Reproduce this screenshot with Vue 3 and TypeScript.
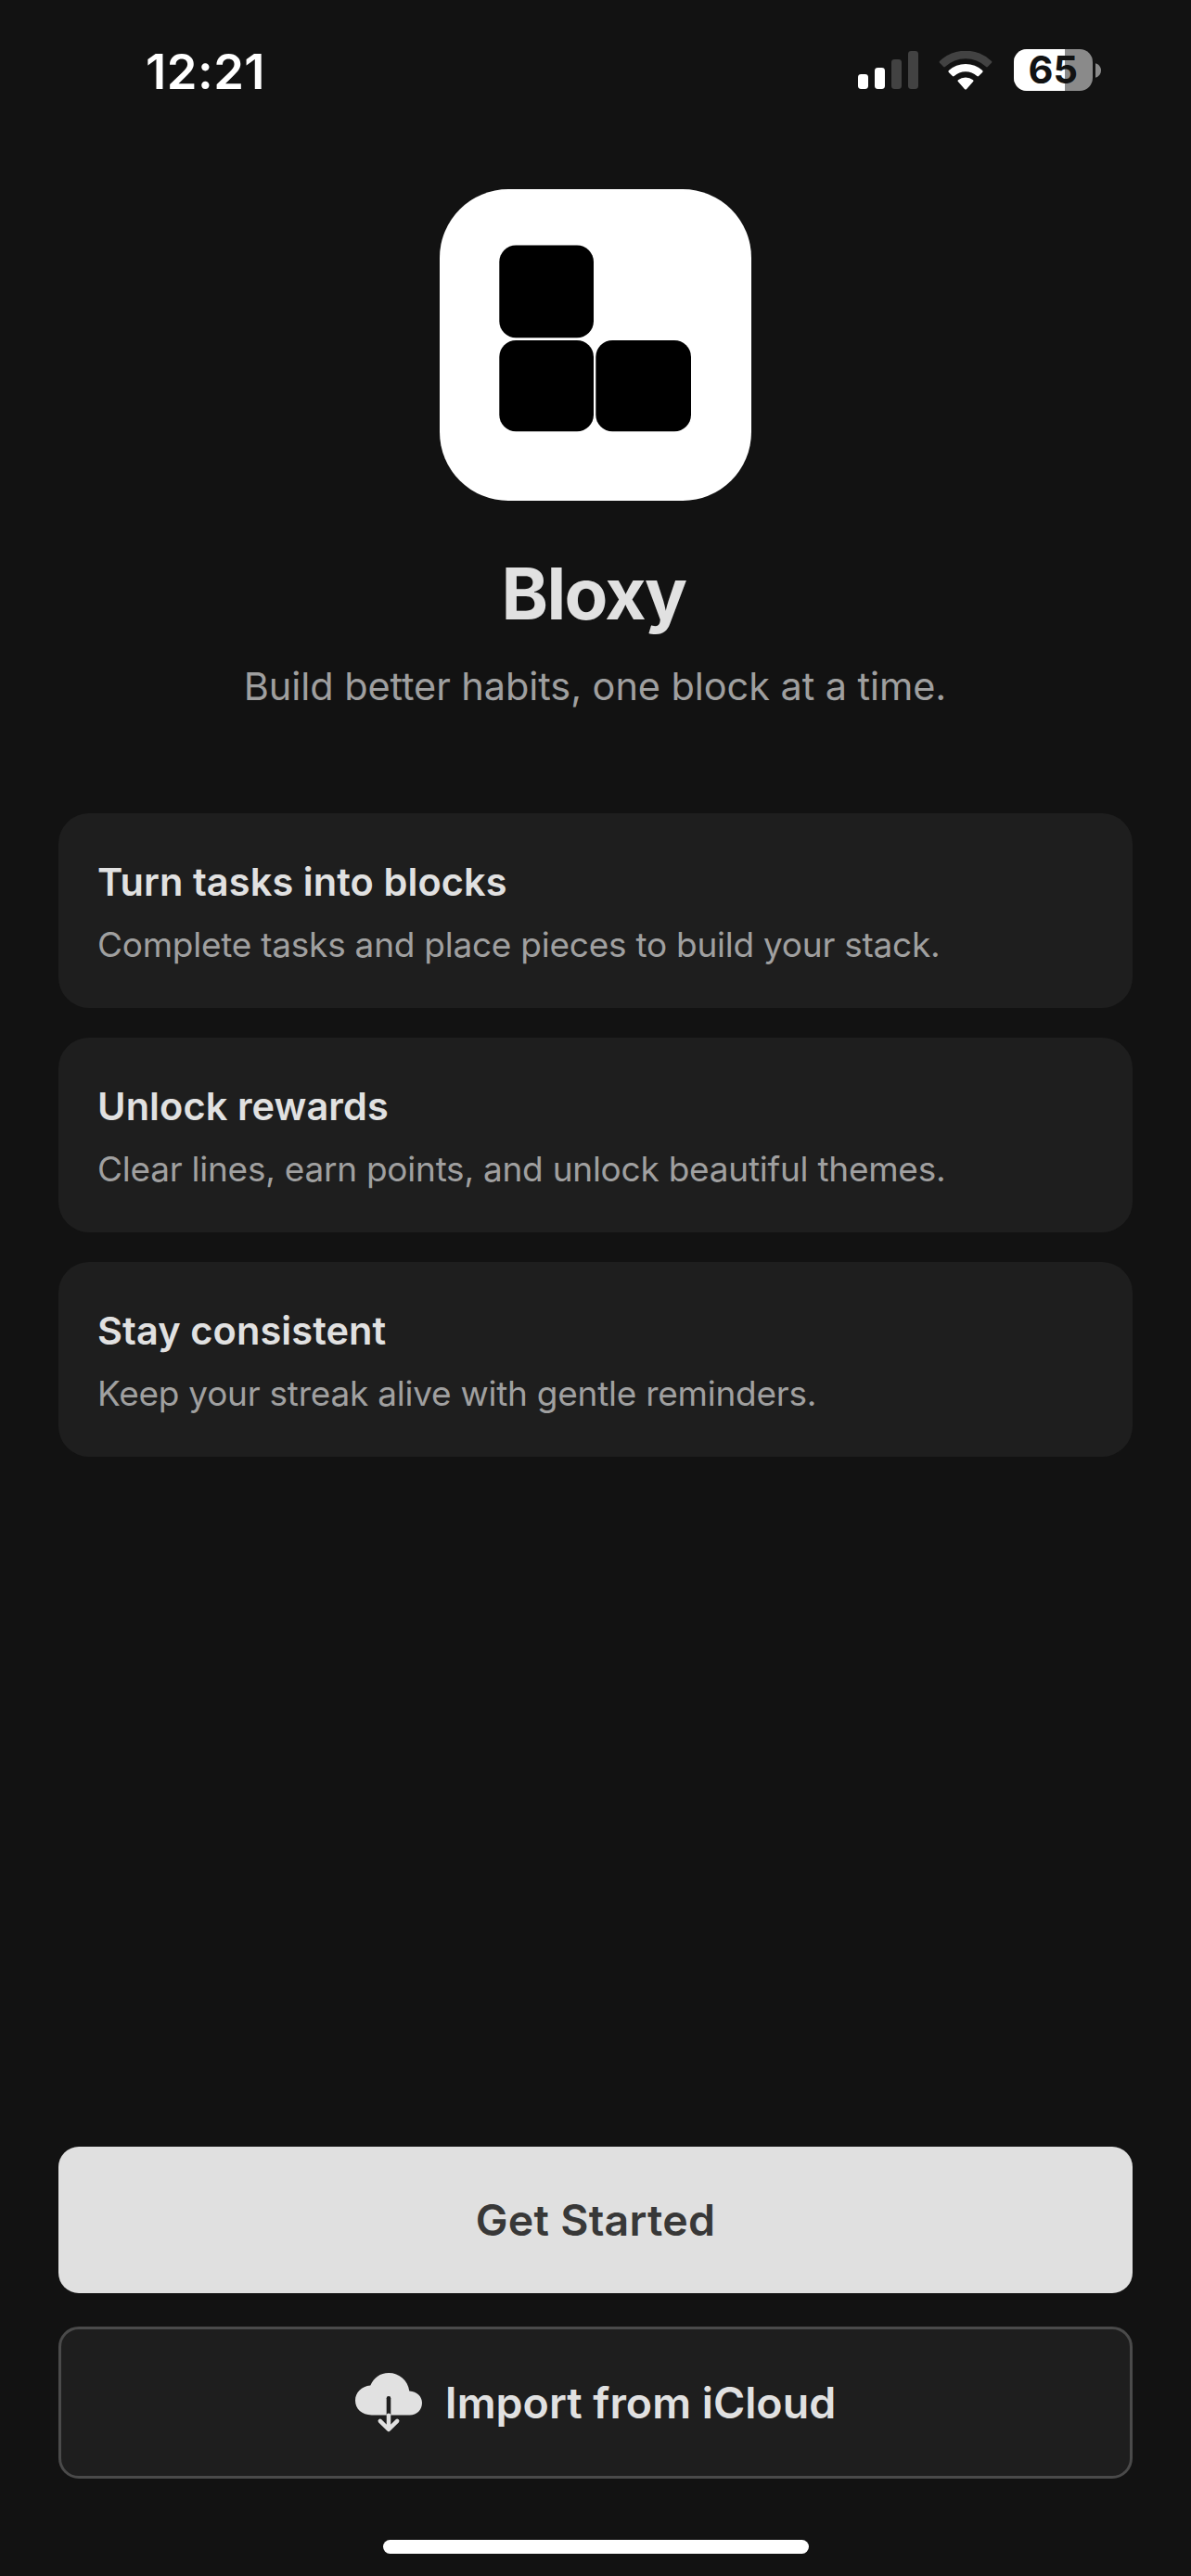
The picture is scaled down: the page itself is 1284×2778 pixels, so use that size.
<script setup lang="ts">
interface Feature {
  title: string
  text: string
}

const features: Feature[] = [
  { title: 'Turn tasks into blocks', text: 'Complete tasks and place pieces to build your stack.' },
  { title: 'Unlock rewards', text: 'Clear lines, earn points, and unlock beautiful themes.' },
  { title: 'Stay consistent', text: 'Keep your streak alive with gentle reminders.' }
]

const batteryLevel = 65
</script>

<template>
  <div class="screen">
    <header class="status">
      <span class="time">12:21</span>
      <div class="indicators">
        <svg class="signal" viewBox="0 0 65 41" width="65" height="41">
          <rect x="0" y="25" width="11" height="16" rx="3.4" fill="#fff" />
          <rect x="18" y="18" width="11" height="23" rx="3.4" fill="#fff" />
          <rect x="36" y="9" width="11" height="32" rx="3.4" fill="#424242" />
          <rect x="54" y="0" width="11" height="41" rx="3.4" fill="#424242" />
        </svg>
        <svg class="wifi" viewBox="0 0 58 42" width="58" height="42">
          <path
            d="M1 10.9A40.5 40.5 0 0 1 57 10.9Q57.8 11.8 57 12.7L52.8 17Q52 17.8 51.1 17A32 32 0 0 0 6.9 17Q6 17.8 5.2 17L1 12.7Q.2 11.8 1 10.9Z"
            fill="#424242"
          />
          <path
            d="M10.8 21.1A26.7 26.7 0 0 1 47.2 21.1Q48.1 22 47.2 22.9L43.1 27Q42.2 27.8 41.3 27A18.5 18.5 0 0 0 16.7 27Q15.8 27.8 14.9 27L10.8 22.9Q9.9 22 10.8 21.1Z"
            fill="#fff"
          />
          <path
            d="M20.9 31.3A13 13 0 0 1 37.1 31.3Q38.1 32.2 37.1 33.1L29.9 41.2Q29 42 28.1 41.2L20.9 33.1Q19.9 32.2 20.9 31.3Z"
            fill="#fff"
          />
        </svg>
        <div class="battery">
          <div class="cell">
            <div class="charge" :style="{ width: batteryLevel + '%' }"></div>
            <span class="percent">{{ batteryLevel }}</span>
          </div>
          <svg viewBox="0 0 6 16" width="6" height="16">
            <path d="M0 .3C3.4 1.2 6 4.3 6 8S3.4 14.8 0 15.7Z" fill="#8a8a8a" />
          </svg>
        </div>
      </div>
    </header>

    <section class="hero">
      <svg class="logo" viewBox="0 0 336 336" width="336" height="336">
        <rect width="336" height="336" rx="74" fill="#fff" />
        <rect x="64.3" y="60.5" width="101.7" height="99.8" rx="18" />
        <rect x="64.3" y="163" width="101.7" height="98.3" rx="18" />
        <rect x="168.3" y="163" width="102.7" height="98.3" rx="18" />
      </svg>
      <h1>Bloxy</h1>
      <p>Build better habits, one block at a time.</p>
    </section>

    <main class="features">
      <article v-for="feature in features" :key="feature.title" class="card">
        <h2>{{ feature.title }}</h2>
        <p>{{ feature.text }}</p>
      </article>
    </main>

    <footer class="actions">
      <button class="primary" type="button">Get Started</button>
      <button class="secondary" type="button">
        <svg viewBox="0 0 72 65" width="72" height="65">
          <path
            d="M17.7 45.4C7.2 45.4 0 39 0 29.8C0 21.3 6.8 14.3 16.3 13.6C19.7 5.3 27 0 36 0C47.5 0 56.6 8 58.3 19.4C66.5 19.9 72 25.2 72 32.2C72 39.9 66.5 45.4 58.7 45.4Z"
            fill="#e1e1e1"
          />
          <path d="M33.7 45V27.2a2.3 2.3 0 0 1 4.6 0V45Z" fill="#1e1e1e" />
          <path
            d="M36 45.7V60.5M26.8 51.8L36 61L45.2 51.8"
            fill="none"
            stroke="#e1e1e1"
            stroke-width="4.5"
            stroke-linecap="round"
            stroke-linejoin="round"
          />
        </svg>
        <span>Import from iCloud</span>
      </button>
    </footer>

    <div class="home-bar"></div>
  </div>
</template>

<style>
body {
  background: #121212;
}
</style>

<style scoped>
.screen {
  box-sizing: border-box;
  display: flex;
  flex-direction: column;
  width: 1284px;
  height: 2778px;
  padding-bottom: 24px;
  background: #121212;
  color: #e1e1e1;
  font-family: Inter, 'Liberation Sans', sans-serif;
}

h1,
h2,
p {
  margin: 0;
}

.status {
  box-sizing: border-box;
  display: flex;
  align-items: flex-start;
  justify-content: space-between;
  height: 204px;
  padding: 45px 97px 0 157px;
  color: #fff;
}

.time {
  font-size: 52.5px;
  font-weight: 600;
  line-height: 64px;
  letter-spacing: 0.5px;
}

.indicators {
  display: flex;
  align-items: flex-start;
  padding-top: 8px;
}

.signal {
  margin: 2px 22px 0 0;
}

.wifi {
  margin: 1.5px 23px 0 0;
}

.battery {
  display: flex;
  align-items: center;
  gap: 3px;
}

.cell {
  position: relative;
  width: 85px;
  height: 45px;
  border-radius: 14px;
  background: #8a8a8a;
}

.charge {
  height: 100%;
  border-radius: 14px 0 0 14px;
  background: #fff;
}

.percent {
  position: absolute;
  top: -4px;
  left: 15.5px;
  color: #121212;
  font-size: 41.5px;
  font-weight: 650;
  line-height: 53px;
}

.hero {
  display: flex;
  flex-direction: column;
  align-items: center;
}

.logo {
  display: block;
}

h1 {
  margin-top: 54px;
  padding-right: 4px;
  font-size: 76.5px;
  font-weight: 700;
  line-height: 92px;
  letter-spacing: -1.6px;
}

.hero p {
  margin-top: 29px;
  padding-right: 1px;
  color: #9f9f9f;
  font-size: 41.5px;
  line-height: 50px;
  letter-spacing: -0.092px;
}

.features {
  display: flex;
  flex-direction: column;
  gap: 32px;
  margin: 112px 63px 0;
}

.card {
  box-sizing: border-box;
  height: 210px;
  padding: 49px 42px 0;
  border-radius: 33px;
  background: #1e1e1e;
}

h2 {
  font-size: 41.5px;
  font-weight: 600;
  line-height: 50px;
  letter-spacing: 0.09px;
}

.card p {
  margin-top: 21px;
  color: #a0a0a0;
  font-size: 37px;
  line-height: 44px;
  letter-spacing: -0.25px;
}

.actions {
  display: flex;
  flex-direction: column;
  gap: 36px;
  margin: auto 63px 66px;
}

button {
  box-sizing: border-box;
  display: flex;
  align-items: center;
  justify-content: center;
  padding: 0;
  border: 0;
  border-radius: 22px;
  font: 600 46.5px/56px Inter, 'Liberation Sans', sans-serif;
}

.primary {
  height: 158px;
  background: #e0e0e0;
  color: #383838;
  letter-spacing: 0.25px;
}

.secondary {
  gap: 25px;
  height: 164px;
  border: 3px solid #4a4a4a;
  background: #1e1e1e;
  color: #e1e1e1;
}

.home-bar {
  align-self: center;
  width: 459px;
  height: 15px;
  border-radius: 8px;
  background: #fff;
}
</style>
